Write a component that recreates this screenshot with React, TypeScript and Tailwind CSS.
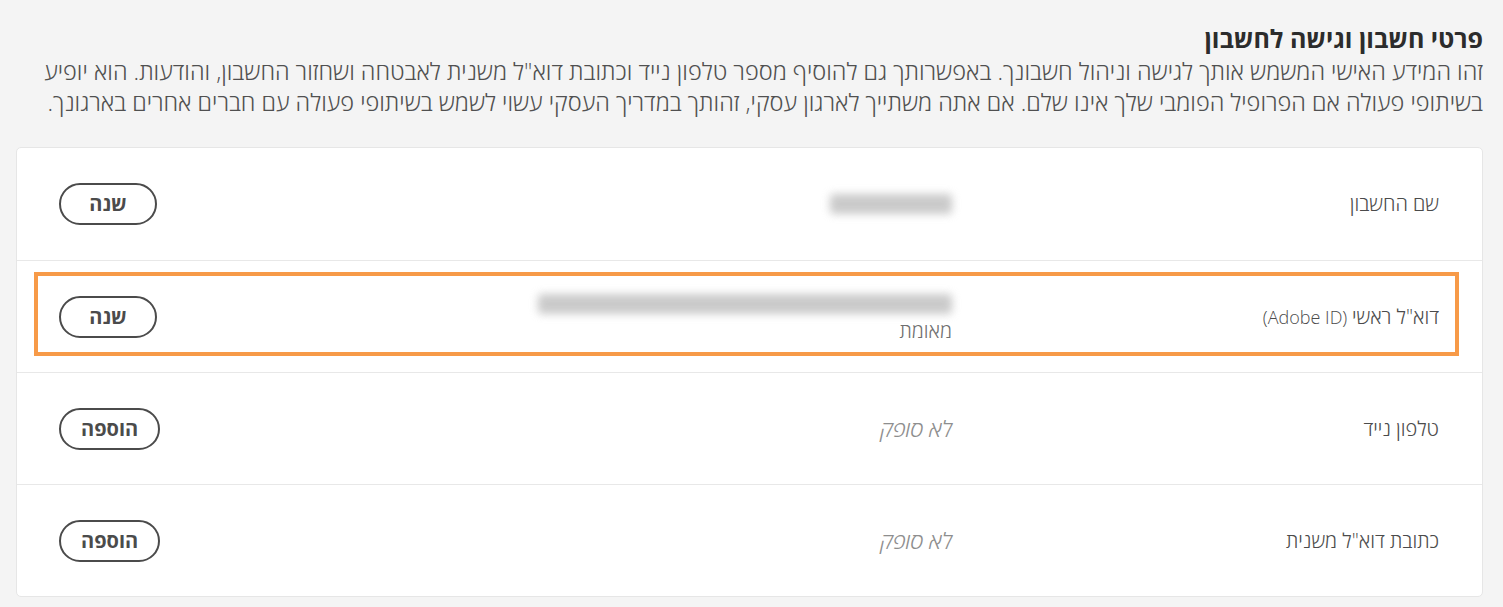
const FONT = "font-['Open_Sans','Liberation_Sans','DejaVu_Sans',sans-serif]";

type Row = {
  label: string;
  latin?: string;
  value?: string;
  blurWidth?: number;
  note?: string;
  action: string;
  highlight?: boolean;
};

const ROWS: Row[] = [
  { label: "שם החשבון", blurWidth: 122, action: "שנה" },
  {
    label: "דוא\"ל ראשי",
    latin: "(Adobe ID)",
    blurWidth: 414,
    note: "מאומת",
    action: "שנה",
    highlight: true,
  },
  { label: "טלפון נייד", value: "לא סופק", action: "הוספה" },
  { label: "כתובת דוא\"ל משנית", value: "לא סופק", action: "הוספה" },
];

function Blurred({ width }: { width: number }) {
  // personal data is blurred in the picture
  return (
    <div className="flex h-[28px] items-center" style={{ width }}>
      <div className="h-[20px] w-full rounded-sm bg-[#b4b4b4] opacity-70 blur-[4px]" />
    </div>
  );
}

export default function App() {
  return (
    <div
      dir="rtl"
      className={`${FONT} min-h-[607px] bg-[#f4f4f4] pr-[20px] pl-[16px] pt-[22px] pb-[10px] text-[#4b4b4b]`}
    >
      <h2 className="text-[25px] font-bold leading-[32px] text-[#2c2c2c]">
        פרטי חשבון וגישה לחשבון
      </h2>
      <p className="mt-[2px] text-[23.5px] font-light leading-[31px] text-[#505050]">
        זהו המידע האישי המשמש אותך לגישה וניהול חשבונך. באפשרותך גם להוסיף מספר טלפון נייד וכתובת דוא"ל משנית לאבטחה ושחזור החשבון, והודעות. הוא יופיע בשיתופי פעולה אם הפרופיל הפומבי שלך אינו שלם. אם אתה משתייך לארגון עסקי, זהותך במדריך העסקי עשוי לשמש בשיתופי פעולה עם חברים אחרים בארגונך.
      </p>

      <div className="mt-[29px] rounded-[5px] border border-[#e6e6e6] bg-white">
        {ROWS.map((row, i) => (
          <div
            key={row.label}
            className={`relative flex h-[112px] items-center pr-[43px] pl-[42px] ${
              i > 0 ? "border-t border-[#e8e8e8]" : ""
            }`}
          >
            <div className="w-[487px] shrink-0 text-[20px] font-light leading-[30px] text-[#4b4b4b]">
              {row.label}
              {row.latin ? (
                <span className="text-[18px]"> {row.latin}</span>
              ) : null}
            </div>
            <div className="flex flex-1 flex-col items-start">
              {row.blurWidth ? <Blurred width={row.blurWidth} /> : null}
              {row.value ? (
                <span className="text-[22.5px] font-light italic leading-[30px] text-[#8e8e8e]">
                  {row.value}
                </span>
              ) : null}
              {row.note ? (
                <span className="mt-[1px] text-[20px] font-light leading-[24px] text-[#6e6e6e]">
                  {row.note}
                </span>
              ) : null}
            </div>
            <button className="flex h-[42px] min-w-[98px] items-center justify-center rounded-full border-2 border-[#4b4b4b] px-[20px] text-[20px] font-bold leading-none text-[#4b4b4b]">
              {row.action}
            </button>
            {row.highlight ? (
              <div className="pointer-events-none absolute top-[11px] bottom-[16px] right-[23px] left-[17px] border-[4px] border-[#f79a48]" />
            ) : null}
          </div>
        ))}
      </div>
    </div>
  );
}
